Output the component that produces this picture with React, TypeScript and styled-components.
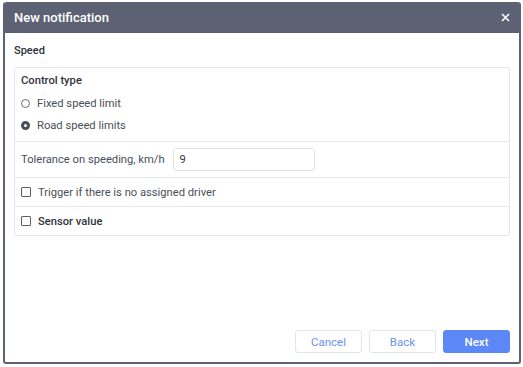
import React from "react";
import styled, { createGlobalStyle } from "styled-components";

const GlobalStyle = createGlobalStyle`
  html, body {
    margin: 0;
    padding: 0;
    background: #ffffff;
  }
  body {
    font-family: Roboto, "Liberation Sans", Arial, sans-serif;
    color: #333740;
  }
`;

const Dialog = styled.div`
  box-sizing: border-box;
  width: 518px;
  height: 362px;
  margin: 2px 0 0 3px;
  border: 2px solid #5c6273;
  border-top: none;
  border-radius: 3px;
  display: flex;
  flex-direction: column;
  overflow: hidden;
`;

const Header = styled.div`
  height: 31px;
  margin: 0 -2px;
  padding: 0 11px;
  background: #5c6273;
  color: #ffffff;
  display: flex;
  align-items: center;
  justify-content: space-between;
  font-size: 13px;
  font-weight: 500;
`;

const Close = styled.button`
  border: none;
  background: none;
  padding: 0;
  color: #ffffff;
  display: flex;
  align-items: center;
  cursor: pointer;
`;

const Body = styled.div`
  flex: 1;
  padding: 0 9px;
  display: flex;
  flex-direction: column;
`;

const SectionTitle = styled.div`
  font-size: 11px;
  font-weight: 500;
  color: #2f333b;
  line-height: 16px;
  margin: 10px 0 8px;
`;

const Card = styled.div`
  border: 1px solid #e4e6ea;
  border-radius: 3px;
`;

const Row = styled.div<{ $h: number }>`
  box-sizing: border-box;
  height: ${({ $h }) => $h}px;
  padding: 0 6px;
  display: flex;
  align-items: center;
  gap: 6px;
  font-size: 11.2px;
  border-top: 1px solid #e8e9ec;
`;

const Group = styled.div`
  padding: 5px 6px 5px;
  display: flex;
  flex-direction: column;
  font-size: 11.2px;
`;

const GroupTitle = styled.div`
  font-weight: 500;
  color: #2f333b;
  line-height: 16px;
  margin-bottom: 3px;
`;

const Option = styled.label`
  height: 22px;
  display: flex;
  align-items: center;
  gap: 7px;
  color: #4a4e57;
`;

const Radio = styled.span<{ $on?: boolean }>`
  box-sizing: border-box;
  width: 9px;
  height: 9px;
  border-radius: 50%;
  border: ${({ $on }) => ($on ? "3px solid #4a4e57" : "1px solid #6a6e77")};
  background: #ffffff;
`;

const Check = styled.span`
  box-sizing: border-box;
  width: 10px;
  height: 10px;
  border: 1px solid #5b5f68;
  border-radius: 1px;
  margin-right: 1px;
`;

const Label = styled.span<{ $strong?: boolean }>`
  color: ${({ $strong }) => ($strong ? "#2f333b" : "#4a4e57")};
  font-weight: ${({ $strong }) => ($strong ? 500 : 400)};
`;

const Input = styled.div`
  box-sizing: border-box;
  width: 142px;
  height: 23px;
  margin-left: 2px;
  border: 1px solid #e1e3e7;
  border-radius: 3px;
  padding: 0 6px;
  display: flex;
  align-items: center;
  color: #333740;
`;

const Footer = styled.div`
  margin-top: auto;
  padding-bottom: 9px;
  display: flex;
  justify-content: flex-end;
  gap: 7px;
`;

const Button = styled.button<{ $primary?: boolean }>`
  box-sizing: border-box;
  width: 67px;
  height: 23px;
  border-radius: 3px;
  font-family: inherit;
  font-size: 11.5px;
  font-weight: ${({ $primary }) => ($primary ? 500 : 400)};
  border: 1px solid ${({ $primary }) => ($primary ? "#5b87f7" : "#e3e5ea")};
  background: ${({ $primary }) => ($primary ? "#5b87f7" : "#ffffff")};
  color: ${({ $primary }) => ($primary ? "#ffffff" : "#6d90ef")};
`;

export default function App() {
  return (
    <>
      <GlobalStyle />
      <Dialog>
        <Header>
          <span>New notification</span>
          <Close aria-label="close">
            <svg width="9" height="9" viewBox="0 0 9 9">
              <path d="M1 1 L8 8 M8 1 L1 8" stroke="#ffffff" strokeWidth="1.6" />
            </svg>
          </Close>
        </Header>
        <Body>
          <SectionTitle>Speed</SectionTitle>
          <Card>
            <Group>
              <GroupTitle>Control type</GroupTitle>
              <Option>
                <Radio />
                Fixed speed limit
              </Option>
              <Option>
                <Radio $on />
                Road speed limits
              </Option>
            </Group>
            <Row $h={36}>
              <Label>Tolerance on speeding, km/h</Label>
              <Input>9</Input>
            </Row>
            <Row $h={29}>
              <Check />
              <Label>Trigger if there is no assigned driver</Label>
            </Row>
            <Row $h={29}>
              <Check />
              <Label $strong>Sensor value</Label>
            </Row>
          </Card>
          <Footer>
            <Button>Cancel</Button>
            <Button>Back</Button>
            <Button $primary>Next</Button>
          </Footer>
        </Body>
      </Dialog>
    </>
  );
}
